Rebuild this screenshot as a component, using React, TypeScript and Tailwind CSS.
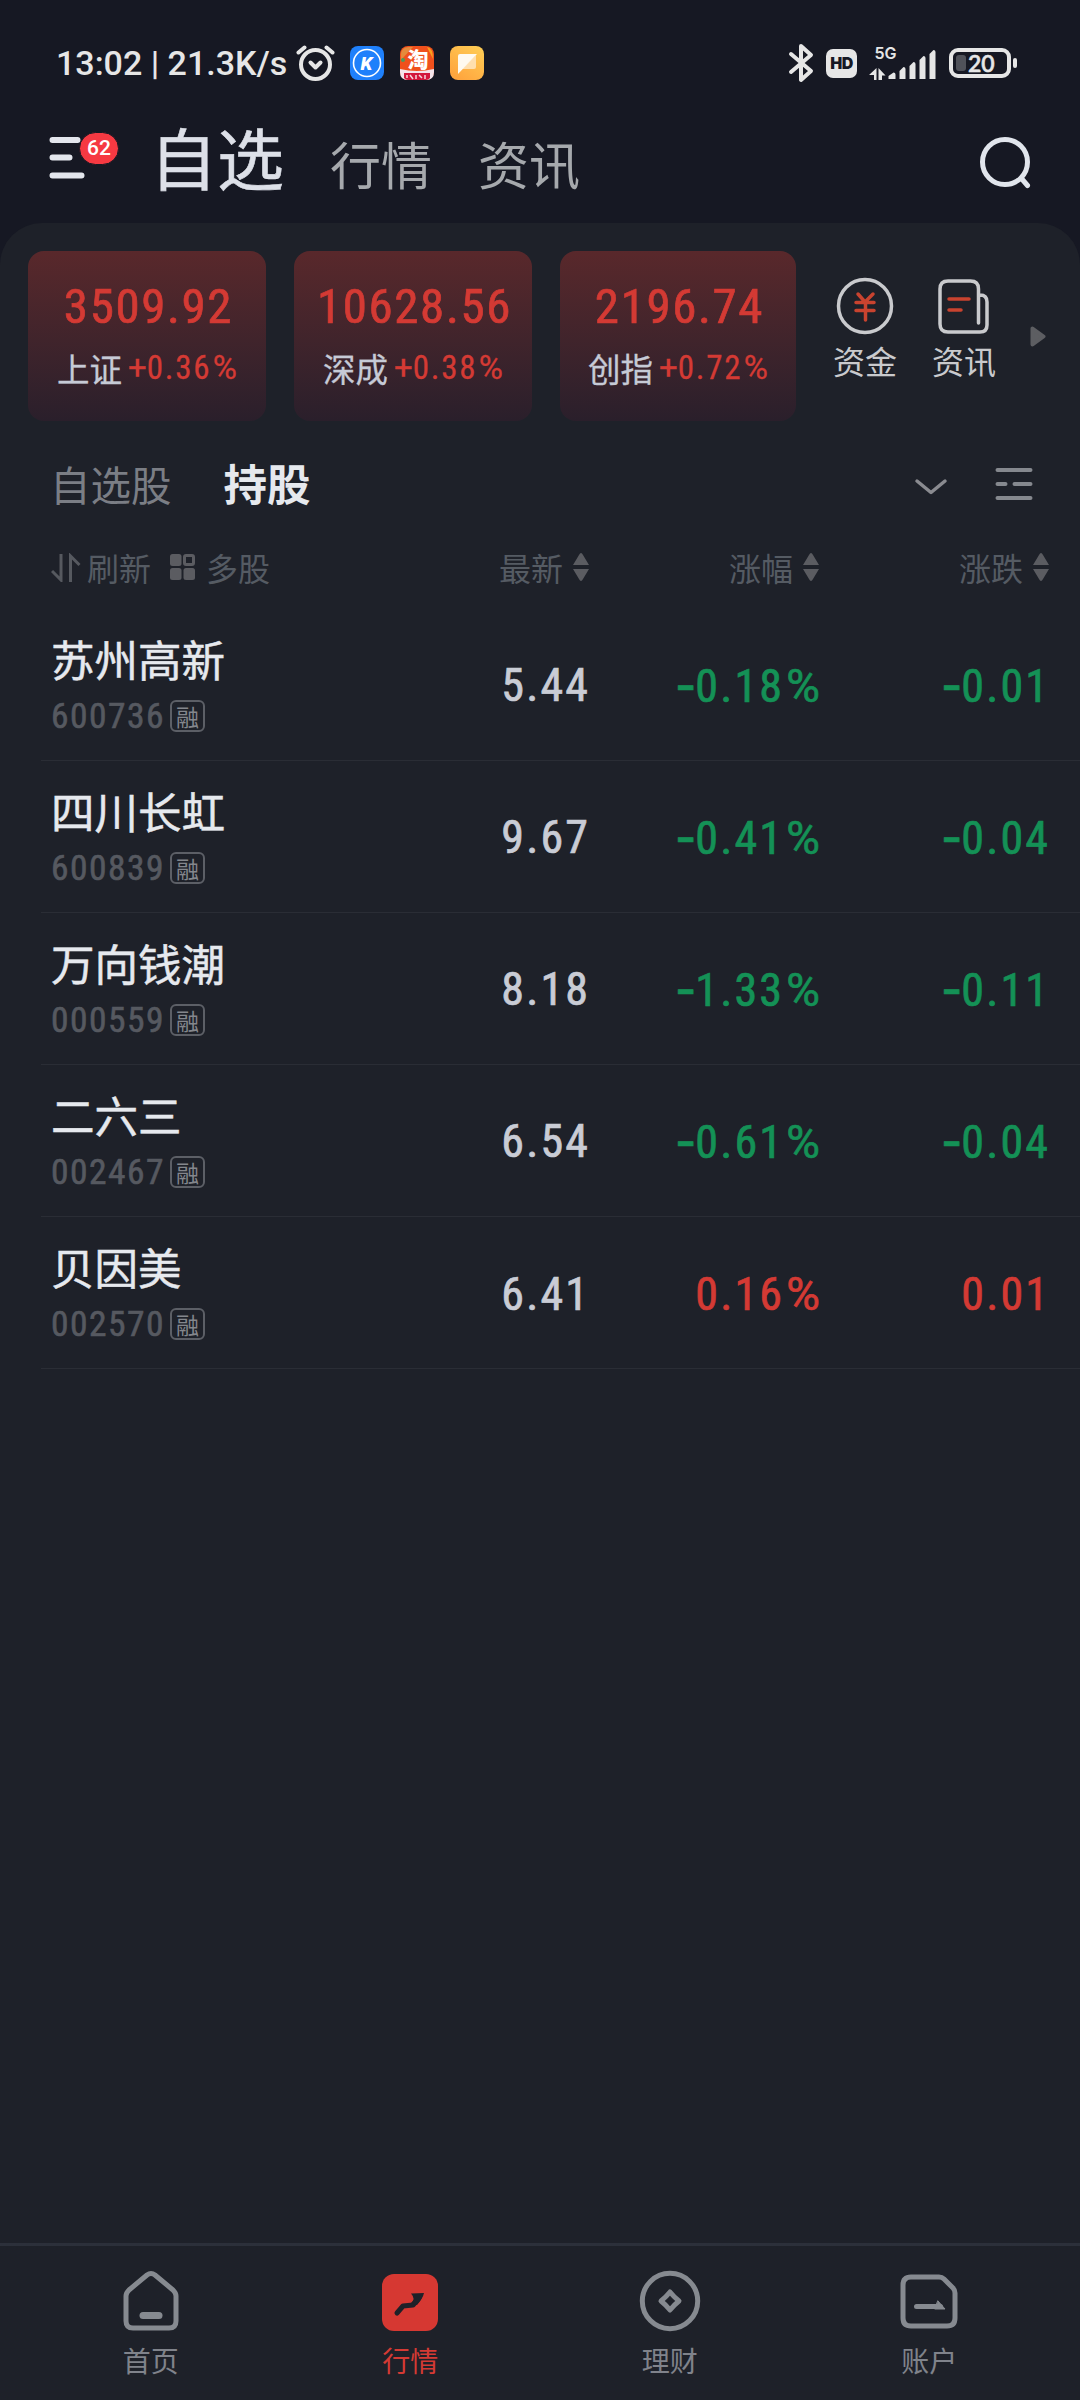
import React from 'react';

const indexes = [
  { value: '3509.92', name: '上证', change: '+0.36%' },
  { value: '10628.56', name: '深成', change: '+0.38%' },
  { value: '2196.74', name: '创指', change: '+0.72%' },
];

const stocks = [
  { name: '苏州高新', code: '600736', price: '5.44', percent: '-0.18%', change: '-0.01' },
  { name: '四川长虹', code: '600839', price: '9.67', percent: '-0.41%', change: '-0.04' },
  { name: '万向钱潮', code: '000559', price: '8.18', percent: '-1.33%', change: '-0.11' },
  { name: '二六三', code: '002467', price: '6.54', percent: '-0.61%', change: '-0.04' },
  { name: '贝因美', code: '002570', price: '6.41', percent: '0.16%', change: '0.01' },
];

const columns = ['最新', '涨幅', '涨跌'];

// Digits are condensed, signs and percent marks keep their full width
const Figure = ({ value }: { value: string }) => {
  return (
    <>
      {value.startsWith('-') && <span className="-mr-[3px] font-['Inter'] font-medium">-</span>}
      {value.startsWith('+') && <span className="font-['Roboto'] tracking-normal">+</span>}
      {value.replace(/[-+%]/g, '')}
      {value.endsWith('%') && <span className="ml-[0.05em] font-['Roboto'] tracking-normal">%</span>}
    </>
  );
};

const StatusBar = () => {
  return (
    <div className="flex h-[126px] items-center pl-14 pr-[69px] text-[#e6e6e6]">
      <p className="w-[240px] whitespace-pre font-['Roboto'] text-[34px] font-medium">13:02 | 21.3K/s</p>

      {/* Alarm */}
      <svg className="h-[38px] w-[39px]" viewBox="0 0 39 38" fill="none" stroke="currentColor" strokeLinecap="round">
        <circle cx="19.5" cy="20.5" r="14.5" strokeWidth="4" />
        <path d="M2.500 8.500 8.500 3.500M36.500 8.500l-6-5" strokeWidth="4" />
        <path d="m14.500 18.500 5 5 5-5" strokeWidth="4" strokeLinejoin="round" />
      </svg>

      {/* Notification icons */}
      <div className="ml-[15px] flex gap-4">
        <svg className="size-[34px]" viewBox="0 0 34 34">
          <rect width="34" height="34" rx="8" fill="#1f80fb" />
          <circle cx="17" cy="17" r="13.500" fill="none" stroke="#fff" strokeWidth="1.600" />
          <text x="16.500" y="24" fill="#fff" fontSize="19" fontWeight="900" fontStyle="italic" textAnchor="middle" fontFamily="Roboto">K</text>
        </svg>
        <svg className="size-[34px] overflow-visible" viewBox="0 0 34 34">
          <rect width="34" height="34" rx="8" fill="#f0501c" />
          <path d="M1 14V9q0-8 8-8h4z" fill="#e58a3c" />
          <circle cx="3" cy="14" r="2" fill="#4c9a5c" />
          <path d="M27 1q6 1 6 12z" fill="#f9a11e" />
          <path d="M0 23q17 4 34 0v3q0 8-8 8H8q-8 0-8-8z" fill="#f4e4ea" />
          <text x="18" y="20.500" fill="#fff" fontSize="21" fontWeight="900" textAnchor="middle" fontFamily="Noto Sans CJK SC">淘</text>
          <path d="M4 27h26v5q-2 2-4 2H8q-2 0-4-2z" fill="#d3173c" />
          <path d="M7 29v3m3-3 3 4m3-4v4m3-4 3 3m3-3v4" stroke="#f6d5dc" strokeWidth="1.500" />
        </svg>
        <svg className="size-[34px]" viewBox="0 0 34 34">
          <defs>
            <linearGradient id="note" x1="1" y1="0" x2="0.300" y2="1">
              <stop offset="0" stopColor="#ffcf56" />
              <stop offset="1" stopColor="#ffa53e" />
            </linearGradient>
          </defs>
          <rect width="34" height="34" rx="8" fill="url(#note)" />
          <path d="M26 9v12q0 2-2 2H12z" fill="#ffdfae" />
          <path d="M8 10q0-2 2-2h17L8 28z" fill="#fffaf0" />
        </svg>
      </div>

      {/* Connectivity */}
      <div className="ml-auto flex items-center">
        <svg className="h-[40px] w-[26px]" viewBox="0 0 26 40" fill="none" stroke="currentColor" strokeWidth="4" strokeLinejoin="round" strokeLinecap="round">
          <path d="m3 11 20 17-10 9V3l10 9L3 29" />
        </svg>
        <div className="ml-3 flex h-[29px] w-[31px] items-center justify-center rounded-[7px] bg-[#e6e6e6] font-['Inter'] text-[16px] font-black tracking-[-0.5px] text-[#161823]">
          HD
        </div>
        <svg className="ml-3 h-[34px] w-[68px] overflow-visible" viewBox="0 0 68 34" fill="currentColor">
          <text x="5.500" y="13" fontSize="16" fontWeight="600" fontFamily="Inter, sans-serif">5G</text>
          <path d="M7.500 22v12H5v-5H0zM9.500 34V22l7 7.500h-3.500V34z" />
          <path d="M19.500 30l5-3.500q2 0 2 2V33h-7zM30.500 25l4-4q2 0 2 2v10h-6zM40.500 20l4-4q2 0 2 2v15h-6zM50.500 14l4-4q2 0 2 2v21h-6zM60.500 8l4-4q2 0 2 2v27h-6z" />
        </svg>
        <div className="relative ml-3 flex h-[30px] w-[62px] items-center rounded-[9px] border-4 border-[#e6e6e6] pl-[3px]">
          <span className="h-4 w-[10px] rounded-[3px] bg-[#50525a]" />
          <span className="ml-[2px] font-['Lato'] text-[23px] leading-none font-semibold [-webkit-text-stroke:0.5px]">20</span>
          <span className="absolute -right-[10px] h-[10px] w-1 rounded-sm bg-[#e6e6e6]" />
        </div>
      </div>
    </div>
  );
};

const Header = () => {
  return (
    <header className="flex h-[97px] px-[48px]">
      <div className="relative mt-2 h-[46px] w-[70px]">
        <svg className="h-[46px] w-[40px]" viewBox="0 0 40 46" stroke="#e3e6ed" strokeWidth="6" strokeLinecap="round">
          <path d="M4.500 6h25M4.500 23.500h17M4.500 41.500h29" />
        </svg>
        <span className="absolute -top-[2px] left-[31px] flex h-[33px] w-[40px] items-center justify-center rounded-full border border-[#161823] bg-[#f63942] font-['Roboto'] text-[21px] font-medium text-white">
          62
        </span>
      </div>
      <nav className="ml-8 flex text-[#a6a9ad]">
        <a className="-mt-[18px] text-[67px] leading-[96px] text-[#dde0e8] [-webkit-text-stroke:0.6px]">自选</a>
        <a className="ml-[46px] -mt-[2px] text-[51px] leading-[78px]">行情</a>
        <a className="ml-[46px] -mt-[2px] text-[51px] leading-[78px]">资讯</a>
      </nav>
      <svg className="mt-[9px] ml-auto h-[54px] w-[54px]" viewBox="0 0 54 54" fill="none" stroke="#e1e5ec" strokeWidth="5" strokeLinecap="round">
        <circle cx="27" cy="27" r="22.500" />
        <path d="m43.500 43.500 6 7" />
      </svg>
    </header>
  );
};

const Indexes = () => {
  return (
    <section className="flex pt-7 pl-7">
      {indexes.map((item) => (
        <div
          key={item.name}
          className="mr-7 flex h-[170px] w-[238px] flex-col items-center rounded-2xl bg-linear-to-b from-[#59282b] to-[#2a1f2b] last-of-type:w-[236px]"
        >
          <p className="mt-[27px] pl-[3px] font-['Roboto_Condensed'] text-[49px] leading-[58px] tracking-[1.6px] text-[#d43a34] [-webkit-text-stroke:0.7px]">{item.value}</p>
          <p className="mt-[8px] flex items-center text-[32.5px] leading-[46px] text-[#c6cad6] [-webkit-text-stroke:0.3px]">
            {item.name}
            <span className="mt-px ml-[6px] font-['Roboto_Condensed'] text-[33px] tracking-[1.7px] text-[#d43a34]">
              <Figure value={item.change} />
            </span>
          </p>
        </div>
      ))}

      {/* Shortcuts */}
      <ul className="mt-6 ml-[9px] flex gap-[35px] text-[32px] leading-[46px] text-[#c9cacd]">
        <li className="flex w-16 flex-col items-center">
          <svg className="h-[62px] w-[60px]" viewBox="0 0 60 62" fill="none" strokeLinecap="round">
            <circle cx="30" cy="31" r="26.500" stroke="#c9cacd" strokeWidth="3.500" />
            <path d="m23 19 7 8 8-8M21 27.500h18M21 35.500h18M30.500 27v18" stroke="#c9432f" strokeWidth="3.500" />
          </svg>
          资金
        </li>
        <li className="flex w-16 flex-col items-center">
          <svg className="h-[62px] w-[60px]" viewBox="0 0 60 62" fill="none" strokeLinecap="round" strokeLinejoin="round" strokeWidth="3.500">
            <path d="M44.500 48V14q0-8-8-8H14q-8 0-8 8v35q0 8 8 8h32q7 0 7-7V27q0-7-7-7" stroke="#c9cacd" />
            <path d="M15 24h20M15 35h12" stroke="#c9432f" />
          </svg>
          资讯
        </li>
      </ul>
      <svg className="mt-[75px] ml-[34px] h-[21px] w-[16px]" viewBox="0 0 16 21" fill="#5d5e62" stroke="#5d5e62" strokeWidth="4" strokeLinejoin="round">
        <path d="M2.500 2.500v16l11-8z" />
      </svg>
    </section>
  );
};

const SortIcon = () => {
  return (
    <svg className="ml-[10px] h-[28px] w-[16px]" viewBox="0 0 16 28" fill="#5b5c61">
      <path d="M8 0q1 0 2 2l6 10H0L6 2q1-2 2-2zM8 28q-1 0-2-2L0 16h16l-6 10q-1 2-2 2z" />
    </svg>
  );
};

const StockTable = () => {
  return (
    <section>
      {/* Tabs */}
      <div className="flex h-[130px] items-center pr-[46px] pb-1 pl-[50px]">
        <span className="text-[40.5px] text-[#7b7e85]">自选股</span>
        <span className="-mt-[2px] ml-[52px] text-[43.5px] font-bold text-[#e6e9ee]">持股</span>
        <svg className="mt-1 ml-auto h-[17px] w-[34px]" viewBox="0 0 34 17" fill="none" stroke="#8a8b90" strokeWidth="3.500" strokeLinecap="round" strokeLinejoin="round">
          <path d="m3 3 14 11.500L31 3" />
        </svg>
        <svg className="ml-[46px] h-[34px] w-[40px]" viewBox="0 0 40 34" stroke="#85888e" strokeWidth="4" strokeLinecap="round">
          <path d="M3.500 3h33M3.500 17h8M20.500 17h16M3.500 31h33" />
        </svg>
      </div>

      {/* Column titles */}
      <div className="-mt-px flex h-[34px] items-center pr-[31px] pl-[51px] text-[32px] text-[#555b63]">
        <svg className="h-[29px] w-[30px]" viewBox="0 0 30 29" fill="none" stroke="#56595f" strokeWidth="3">
          <path d="M1 18l9 9V1M19.500 29V3l9 9" />
        </svg>
        <span className="ml-[6px]">刷新</span>
        <svg className="ml-[19px] h-[26px] w-[25px]" viewBox="0 0 25 26" fill="#5b5c61">
          <rect width="11.500" height="12" rx="2.500" />
          <rect x="14.500" y="1.500" width="9" height="9" rx="1.500" fill="none" stroke="#5b5c61" strokeWidth="3" />
          <rect y="14" width="11.500" height="12" rx="2.500" />
          <rect x="13.500" y="14" width="11.500" height="12" rx="2.500" />
        </svg>
        <span className="ml-[11px]">多股</span>
        <div className="ml-auto flex">
          {columns.map((title) => (
            <div key={title} className="flex w-[230px] items-center justify-end">
              {title}
              <SortIcon />
            </div>
          ))}
        </div>
      </div>

      {/* Rows */}
      <ul className="mt-[25px] ml-[41px]">
        {stocks.map((stock) => {
          const color = stock.change.startsWith('-') ? 'text-[#149156]' : 'text-[#d43a34]';
          return (
            <li key={stock.code} className="flex h-[152px] items-center border-b border-[#2a2d35] pr-[30px] pl-[10px]">
              <div className="-mt-[3px]">
                <p className="text-[43.5px] leading-[60px] text-[#e6e9ee] [-webkit-text-stroke:0.5px]">{stock.name}</p>
                <div className="mt-[6px] flex items-center">
                  <span className="w-[115px] font-['Roboto_Condensed'] text-[35.5px] leading-[42px] tracking-[1.5px] text-[#565960] [-webkit-text-stroke:0.6px]">{stock.code}</span>
                  <span className="ml-1 flex h-8 w-[35px] items-center justify-center rounded-md border-2 border-[#5c5f66] text-[23px] leading-none text-[#84878d]">
                    融
                  </span>
                </div>
              </div>
              <div className="mt-[3px] ml-auto flex text-right font-['Roboto_Condensed'] text-[46px] tracking-[2.1px] [-webkit-text-stroke:0.7px]">
                <span className="w-[230px] text-[#c9ccd5]">{stock.price}</span>
                <span className={`w-[230px] ${color}`}>
                  <Figure value={stock.percent} />
                </span>
                <span className={`w-[230px] ${color}`}>
                  <Figure value={stock.change} />
                </span>
              </div>
            </li>
          );
        })}
      </ul>
    </section>
  );
};

const TabBar = () => {
  return (
    <footer className="mt-auto flex h-[157px] border-t-[3px] border-[#2c303a] px-[21px] text-[28px] leading-[50px] text-[#80838b]">
      <div className="flex flex-1 flex-col items-center pt-[21px]">
        <svg className="size-[68px]" viewBox="0 0 68 68" fill="none" stroke="#868a90" strokeLinejoin="round" strokeLinecap="round">
          <path d="M30 8q4-3 8 0l18 15q3 3 3 6v25q0 7-7 7H16q-7 0-7-7V29q0-3 3-6z" strokeWidth="5" />
          <path d="M26 48.500h16" strokeWidth="7" />
        </svg>
        首页
      </div>
      <div className="flex flex-1 flex-col items-center pt-[21px] text-[#d43a34]">
        <svg className="size-[68px]" viewBox="0 0 68 68">
          <rect x="6" y="7" width="56" height="57" rx="12" fill="#d63832" />
          <path d="m21 46 6-7 10-1 6-7" fill="none" stroke="#1e2129" strokeWidth="5" strokeLinecap="round" strokeLinejoin="round" />
          <path d="M35.500 26.500 48 26q-1 5-7 12l-6-2q5-4 0-9.500z" fill="#1e2129" />
        </svg>
        行情
      </div>
      <div className="flex flex-1 flex-col items-center pt-[21px]">
        <svg className="size-[68px]" viewBox="0 0 68 68" fill="none" stroke="#868a90" strokeWidth="5">
          <circle cx="34" cy="34" r="27.700" />
          <path d="M34 25q4 5 9 9-5 4-9 9-4-5-9-9 5-4 9-9z" strokeLinejoin="round" />
        </svg>
        理财
      </div>
      <div className="flex flex-1 flex-col items-center pt-[21px]">
        <svg className="size-[68px]" viewBox="0 0 68 68" fill="none" stroke="#868a90" strokeWidth="5" strokeLinejoin="round" strokeLinecap="round">
          <path d="M16 10h28q3 0 5 2l9 9q2 2 2 5v25q0 8-8 8H16q-8 0-8-8V18q0-8 8-8z" />
          <path d="M21.500 39.500h24" />
          <path d="m43 34 7 8H40z" fill="#868a90" strokeWidth="1" />
        </svg>
        账户
      </div>
    </footer>
  );
};

export default function App() {
  return (
    <div className="flex h-[2400px] w-[1080px] flex-col bg-[#161823] font-['Noto_Sans_CJK_SC',sans-serif]">
      <StatusBar />
      <Header />
      <main className="flex flex-1 flex-col rounded-t-[42px] bg-[#1e2129]">
        <Indexes />
        <StockTable />
        <TabBar />
      </main>
    </div>
  );
}
